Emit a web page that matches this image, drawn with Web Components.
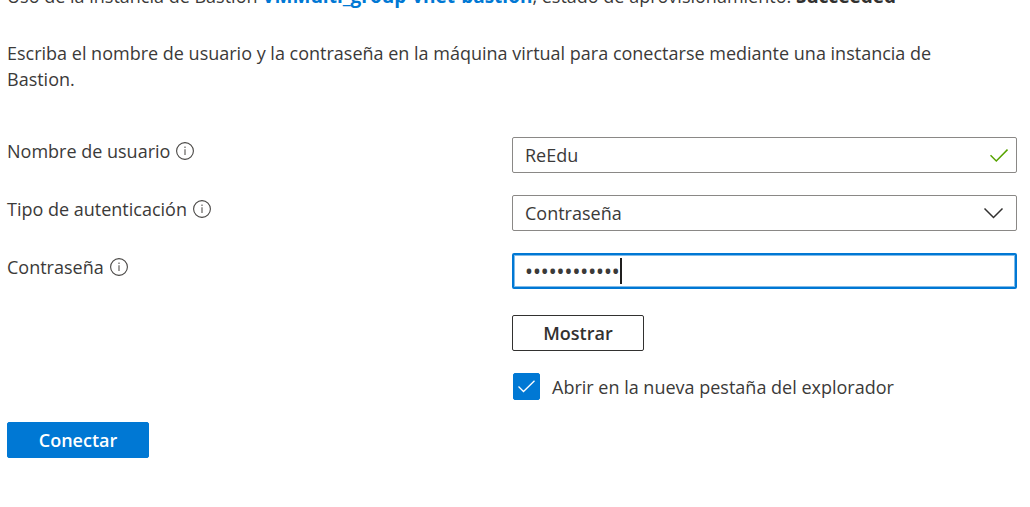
<!DOCTYPE html>
<html lang="es">
<head>
<meta charset="utf-8">
<title>Conectar mediante Bastion</title>
<style>
  body {
    margin: 0;
    background: #fff;
    color: #3b3a39;
    font: 18px/26px "Open Sans", "Noto Sans", sans-serif;
    overflow: hidden;
  }
</style>
</head>
<body>
<bastion-form></bastion-form>

<template id="bastion-form">
  <style>
    :host { display: block; margin-top: -17px; padding: 0 13px 48px 7px; }
    p { margin: 0; padding-right: 40px; }
    .intro { margin-top: 31px; }
    a, b { font-size: 19px; font-weight: 700; line-height: 1; }
    a { color: #0078d4; text-decoration: none; }
    b { color: #323130; }
    form { margin: 45px 0 0; display: grid; gap: 22px; }
    .side { display: grid; grid-template-columns: 1fr 1fr; margin-top: 4px; }
    .side > * { grid-column: 2; justify-self: start; }
  </style>
  <p>Uso de la instancia de Bastion <a href="#bastion">VMMulti_group-vnet-bastion</a>, estado de aprovisionamiento: <b>Succeeded</b></p>
  <p class="intro">Escriba el nombre de usuario y la contraseña en la máquina virtual para conectarse mediante una instancia de Bastion.</p>
  <form>
    <form-field kind="text" label="Nombre de usuario" value="ReEdu"></form-field>
    <form-field kind="select" label="Tipo de autenticación" value="Contraseña"></form-field>
    <form-field kind="password" label="Contraseña" value="bastion12345"></form-field>
    <div class="side"><action-button>Mostrar</action-button></div>
    <check-option>Abrir en la nueva pestaña del explorador</check-option>
    <action-button primary>Conectar</action-button>
  </form>
</template>

<template id="form-field">
  <style>
    :host { display: grid; grid-template-columns: 1fr 1fr; align-items: start; }
    .caption { display: flex; align-items: center; gap: 6px; height: 28px; }
    .box {
      display: flex; align-items: center; box-sizing: border-box; height: 36px;
      padding: 0 8px 0 12px; border: 1px solid #8a8886; border-radius: 2px; background: #fff;
    }
    .box.active { border: 2px solid #0078d4; padding: 0 8px 0 11px; box-shadow: inset 0 0 0 1px #80bbe9; }
    input, select {
      flex: 1; min-width: 0; height: 26px; margin: 0; padding: 0; border: 0; outline: 0;
      appearance: none; background: none; color: inherit; font: inherit;
    }
    .active input { flex: none; field-sizing: content; caret-color: transparent; font-family: "Noto Sans", sans-serif; font-size: 21px; }
    .caret { width: 2px; height: 26px; background: #201f1e; }
    svg { display: block; flex: none; fill: none; }
  </style>
  <div class="caption">
    <label for="control"></label>
    <svg width="18" height="18" viewBox="0 0 18 18" aria-hidden="true">
      <circle cx="9" cy="9" r="8.4" stroke="#484644" stroke-width="1.1"/>
      <path d="M9 7.2V13" stroke="#797775" stroke-width="1.4"/>
      <path d="M9 4.6V6" stroke="#797775" stroke-width="1.4"/>
    </svg>
  </div>
  <div class="box"></div>
</template>

<template id="action-button">
  <style>
    :host { display: block; justify-self: start; }
    button {
      display: block; box-sizing: border-box; min-width: 132px; height: 36px; margin: 0; padding: 0 28px;
      border: 1px solid #323130; border-radius: 2px; background: #fff; color: #323130;
      font: inherit; font-weight: 600; line-height: 34px;
    }
    :host([primary]) button { min-width: 142px; border-color: #0078d4; background: #0078d4; color: #fff; }
  </style>
  <button type="button"><slot></slot></button>
</template>

<template id="check-option">
  <style>
    :host { display: grid; grid-template-columns: 1fr 1fr; }
    label { grid-column: 2; display: flex; align-items: center; gap: 12px; padding-left: 1px; }
    .tick { display: grid; flex: none; }
    .tick > * { grid-area: 1 / 1; }
    input { appearance: none; width: 27px; height: 27px; margin: 0; border: 1px solid #323130; border-radius: 2px; }
    input:checked { border-color: #0078d4; background: #0078d4; }
    svg { fill: none; stroke: #fff; pointer-events: none; }
  </style>
  <label>
    <span class="tick">
      <input type="checkbox" checked>
      <svg width="27" height="27" viewBox="0 0 27 27" aria-hidden="true"><path d="M5.5 13.5L10.5 18.5L21.5 7.8" stroke-width="1.3"/></svg>
    </span>
    <span><slot></slot></span>
  </label>
</template>

<script>
  class TemplateElement extends HTMLElement {
    constructor() {
      super();
      this.attachShadow({ mode: "open" })
        .append(document.getElementById(this.localName).content.cloneNode(true));
    }
  }

  const CHECK = '<svg width="18" height="18" viewBox="0 0 18 18" aria-hidden="true"><path d="M.5 9.2L6.3 15L17.5 3.6" stroke="#57a300" stroke-width="1.5"/></svg>';
  const CHEVRON = '<svg width="28" height="18" viewBox="0 0 28 18" aria-hidden="true"><path d="M4.5 4.5L13.5 13.5L22.5 4.5" stroke="#323130" stroke-width="1.5"/></svg>';

  class FormField extends TemplateElement {
    connectedCallback() {
      const box = this.shadowRoot.querySelector(".box");
      const kind = this.getAttribute("kind");
      const value = this.getAttribute("value");
      this.shadowRoot.querySelector("label").textContent = this.getAttribute("label");

      const control = document.createElement(kind === "select" ? "select" : "input");
      control.id = "control";
      if (kind === "select") {
        control.add(new Option(value));
      } else {
        control.type = kind;
        control.value = value;
      }
      box.replaceChildren(control);

      if (kind === "password") {
        box.classList.add("active");
        const caret = document.createElement("span");
        caret.className = "caret";
        box.append(caret);
      } else {
        box.insertAdjacentHTML("beforeend", kind === "select" ? CHEVRON : CHECK);
      }
    }
  }

  customElements.define("form-field", FormField);
  customElements.define("action-button", class extends TemplateElement {});
  customElements.define("check-option", class extends TemplateElement {});
  customElements.define("bastion-form", class extends TemplateElement {});
</script>
</body>
</html>
